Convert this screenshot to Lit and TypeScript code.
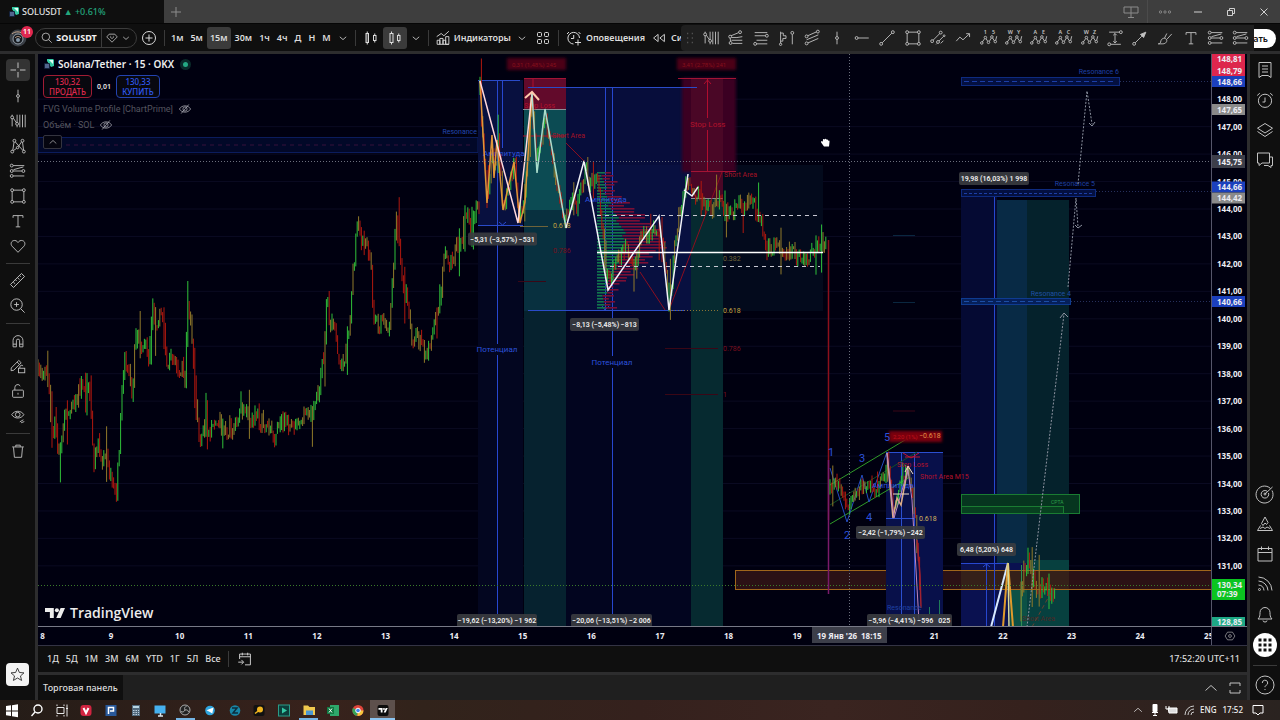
import { LitElement, html, svg, css } from "lit";
import { customElement, state } from "lit/decorators.js";
import { classMap } from "lit/directives/class-map.js";

/* ---------- icons: 20 x 20 grid, 1px strokes ---------- */
const dot = (x: number, y: number, r = 1.6) => svg`<circle cx=${x} cy=${y} r=${r} fill="none"></circle>`;
const p = (d: string) => svg`<path d=${d}></path>`;
const wave = (a: string, b: string) => svg`
  <path d="M2.5 14.5 5 11M6.8 10.8 8.4 13.4M10.5 13.6 12.4 10.2M14 10 16 13.2"></path>
  ${dot(2, 15.5, 1.4)}${dot(6, 9.5, 1.4)}${dot(9.4, 14.8, 1.4)}${dot(13.2, 8.8, 1.4)}${dot(17, 14, 1.4)}${p("M17.4 12.6 18.6 8")}
  <text x="6" y="5.5" class="wl">${a}</text><text x="15" y="5.5" class="wl">${b}</text>`;
const fibs = svg`${p("M4.6 4H17M4.6 10H14.4M4.6 15.500H17M5 8.500 16 5.500")}${dot(3, 4)}${dot(3, 10)}${dot(16, 10)}${dot(3, 15.5)}`;

const icons: Record<string, unknown> = {
  cross: p("M10 2.5V8M10 12v5.5M2.5 10H8M12 10h5.5"),
  vline: svg`${p("M10 3V8.4M10 11.6V17")}${dot(10, 10)}`,
  cycles: svg`${p("M3.5 7.5V16M4.8 6.8 8.4 12.2M9 3v8.500M9 14.8V17M12 3v14M15 3v14M18 3v14M3.5 3v1.500")}${dot(3.5, 6)}${dot(9, 13.2)}`,
  xabcd: svg`${p("M4.2 15 5.6 5.8M7 5.5 15.500 15M15 5.8 16.2 14.600M14 5.300 10.500 10.500M4.800 15.200 8.500 12.600")}${dot(3.6, 16.2)}${dot(6, 4.2)}${dot(15, 4.2)}${dot(16.5, 16.2)}${dot(9.5, 11.8, 1.3)}`,
  fibs,
  rect: svg`${p("M5 3.5H15M5 16.5H15M3.5 5V15M16.5 5V15")}${dot(3.5, 3.5)}${dot(16.5, 3.5)}${dot(3.5, 16.5)}${dot(16.5, 16.5)}`,
  text: p("M4.5 6.5V4h11v2.5M10 4v12.5M7.5 16.5h5"),
  heart: p("M10 17 3.4 10.2C1.6 8.2 2.2 5 4.7 4.1 7 3.3 9 4.4 10 6.2 11 4.4 13 3.3 15.3 4.1 17.8 5 18.4 8.2 16.6 10.2Z"),
  ruler: p("M2.6 14.2 14.2 2.6 17.4 5.8 5.8 17.4ZM5.5 11.5l2 2M7.8 9.2l1.3 1.3M10 7l2 2M12.2 4.8l1.3 1.3"),
  zoom: svg`<circle cx="9" cy="9" r="6"></circle>${p("M13.5 13.5 17.5 17.5M9 6.5v5M6.5 9h5")}`,
  magnet: p("M4.500 16.5V9.5a5.500 5.500 0 0 1 11 0v7h-3.700V9.7a1.800 1.800 0 0 0-3.600 0v6.8ZM4.500 13.5H8.200M11.800 13.5h3.700"),
  pencil: svg`${p("M2.5 12.2 10.8 3.8l2.7 2.6-8.2 8.3-3 .5ZM9 5.6l2.7 2.7")}<rect x="10.5" y="12.5" width="7" height="5"></rect>${p("M12 12.3V11a2 2 0 0 1 3.6-1")}`,
  lock: svg`<rect x="4" y="9" width="12" height="8" rx="1"></rect>${p("M6.5 9V6a3.2 3.2 0 0 1 6-1.5M10 12v2")}`,
  eye: svg`${p("M3 8.5C6 3.5 13.500 3.5 16.500 8.5 13.500 13.5 6 13.5 3 8.5ZM12 16.500l4-2.300M13.500 17.5l3.500-1.300")}<circle cx="9.700" cy="8.5" r="2.6"></circle>`,
  eyeoff: svg`${p("M2 10C5.5 4 14.5 4 18 10 14.5 16 5.5 16 2 10ZM15.5 3.5l-11 13")}<circle cx="10" cy="10" r="3"></circle>`,
  trash: p("M3.5 5.5h13M7.5 5.3V3.5h5v1.8M5 5.8 6 17h8L15 5.8"),
  star: p("M10 2.5 12.2 7.6 17.6 8.1 13.5 11.7 14.8 17 10 14.1 5.2 17 6.5 11.7 2.4 8.1 7.8 7.6Z"),
  search: svg`<circle cx="9" cy="9" r="5.8"></circle>${p("M13.200 13.200 18 18")}`,
  gem: p("M6 4.500h8l3.500 4L10 16 2.500 8.500ZM7.500 8.500 10 11 12.500 8.500M8 7v1M12 7v1"),
  chev: p("M6 8.5 10 12 14 8.5"),
  up: p("M4.500 12.500 10 7.500 15.500 12.500"),
  plus: svg`<circle cx="10" cy="10" r="6.500"></circle>${p("M10 6.5v7M6.5 10h7")}`,
  candles: svg`<rect x="5" y="5.500" width="2.500" height="9" fill="currentColor" fill-opacity=".35"></rect><rect x="12.500" y="7.500" width="2.500" height="5"></rect>${p("M6.250 3.500v2M6.250 14.500V16.500M13.750 5.500v2M13.750 12.500v2")}`,
  hollow: svg`<rect x="5" y="5.500" width="3" height="9"></rect><rect x="12.500" y="7.500" width="2.500" height="5"></rect>${p("M6.500 3.500v2M6.500 14.500V16.500M13.750 5.500v2M13.750 12.500v2")}`,
  indic: p("M3 8.5 8 5 11 7.5 16.5 2.5M3.5 17V12.5h3V17M6.5 17V10.5h3.5V17M10 17V12.5h3V17M13 17V8.5h3.5V17ZM3.5 17h13"),
  tiles: svg`<rect x="4.500" y="4.500" width="4" height="4" rx="1"></rect><rect x="11.500" y="4.500" width="4" height="4" rx="1"></rect><rect x="4.500" y="11.500" width="4" height="4" rx="1"></rect><rect x="11.500" y="11.500" width="4" height="4" rx="1"></rect>`,
  alarm: svg`${p("M15.500 10a5.800 5.800 0 1 0-6 6M9.700 7V10.500H7M3 6 5 4M14.500 4l2 2M14 11.500v6M11 14.500h6")}`,
  clock: svg`<circle cx="10" cy="10.8" r="6.6"></circle>${p("M10 7.5V12H7.5M2.2 5.5 4.8 3.2M15.2 3.2l2.6 2.3")}`,
  rewind: p("M9 6 4 10 9 14ZM16 6 11 10 16 14Z"),
  grip: svg`<path d="M7 5h1M12 5h1M7 10h1M12 10h1M7 15h1M12 15h1" stroke-width="1.4"></path>`,
  fan: svg`${p("M4.500 7.500 13 4M5 9.500H11L17 8.500M5 12.500H17M6 16H17M4 14 3.500 10")}${dot(14.5, 3.5)}${dot(3.5, 8.5)}${dot(4, 15.5)}`,
  lines: svg`${p("M3 4H17M3 7.500H15M5 12.500H17M5 16.500H17")}${dot(16.5, 7.5)}${dot(3.5, 16.5)}`,
  profile: svg`${p("M4 3v13M4 4.500h3v3h3v3H6.500v3H4M17 6V17")}${dot(4, 17, 1.3)}${dot(17, 4.3)}`,
  channel: svg`${p("M5.2 7.5 15 3.200M4 12 17 6.500M5.5 15.500 17 10.500")}${dot(16.5, 2.9)}${dot(4, 8.2)}${dot(4, 16)}`,
  hray: svg`${p("M5.6 10H17.5")}${dot(4, 10)}`,
  trend: svg`${p("M4.6 15.400 15.400 4.600")}${dot(3.5, 16.5)}${dot(16.5, 3.5)}`,
  parallel: svg`${p("M4.5 12.5 12 5M11 13.400 16 8.300M8 17l1-1M13 16l3-3")}${dot(3.5, 13.5)}${dot(13, 4)}${dot(10, 14.4)}${dot(16.8, 7.5, 1)}`,
  zig: p("M2.5 13.500 6.5 9 10 12 17 5.5M13.5 5.2H17.3V9"),
  w15: wave("1", "5"), wwy: wave("W", "Y"), wae: wave("A", "E"), wac: wave("A", "C"), wwz: wave("W", "Z"),
  range: svg`${p("M3.500 3.500H15M5.200 17H16.500M10 5V15.5M8 7l2-2 2 2M8 13.5l2 2 2-2")}${dot(3.6, 17)}${dot(16.5, 3.5)}`,
  arrow: svg`${p("M4.6 15.400 12 8")}<path d="M16.500 3.500 14 9.500 10.500 6Z" fill="currentColor"></path>${dot(3.5, 16.5)}`,
  brush: p("M2.500 16.500c2 0 2.500-1 3-3.500 1-3 4.500-3.500 6-1.500 1.500 2-.5 5-4 5ZM9.500 10 12 5M12 11.500 17.500 5.500"),
  doc: p("M4 2.500H16V17.500L13 15.500H7L4 17.500ZM7 6h6M7 9h6M7 12h6"),
  layers: p("M10 3.500 17.500 8.200 10 13 2.500 8.200ZM2.500 11.500 10 16.500 17.500 11.500"),
  chat: p("M2.500 3H14.500V13H7L4 15.500V13H2.500ZM14.500 7H17.500V15.500H16V17.500L13 15.500H9"),
  target: svg`<path d="M15.500 4.500A8.500 8.500 0 1 0 17 6.500"></path><path d="M12.500 7.500a3.800 3.800 0 1 0 1 1.500M10 10 17.500 3"></path><circle cx="10" cy="10" r="1"></circle>`,
  pyramid: p("M10 3 13 8.500 11.500 10.500 10 9 8 11.500 6.500 9.500ZM5.500 11.500 2.500 16.500H17.500L14.500 11.500M5 14.500 8 13 10 14.500 12 13 15 14.500"),
  cal: p("M3 4.500H17V17H3ZM3 8.500H17M6.500 2.500v3.500M13.500 2.500v3.500"),
  feed: svg`${p("M3.500 3A14 14 0 0 1 17 16.500M3.500 7A10 10 0 0 1 13 16.500M3.500 11A6 6 0 0 1 9 16.500")}<circle cx="4.500" cy="15.500" r="1"></circle>`,
  bell: p("M3 15H17C15 13 15 11 15 8.500A5 5 0 0 0 5 8.500C5 11 5 13 3 15ZM8 16.500a2 1.500 0 0 0 4 0"),
  help: svg`<circle cx="10" cy="10" r="9"></circle>${p("M7.300 8a2.700 2.700 0 1 1 3.900 2.300C10.300 10.800 10 11.200 10 12.200M10 14v1")}`,
  goto: p("M4 10V4.500H16V16.500H10M4 7.500H16M7 3v3M13 3v3M2.500 13.500H8M6 11l2.500 2.500L6 16"),
  full: p("M5 8V5H15V8M5 12v3H15V12"),
  nut: svg`${p("M6.500 4.500h7L17 10l-3.500 5.500h-7L3 10Z")}<circle cx="10" cy="10" r="2"></circle>`,
  screens: p("M3 5H17V11H3ZM10 5V15M7 15.500h6"),
  dots3: svg`${dot(5, 10, 1.300)}${dot(10, 10, 1.300)}${dot(15, 10, 1.300)}`,
  min: p("M6 10h8"),
  restore: p("M6.500 8.500h5v5h-5ZM8.500 8.500V6.500h5v5H11.500"),
  close: p("M6.500 6.500l7 7M13.500 6.500l-7 7"),
  add: p("M10 5v10M5 10h10"),
};
const icon = (n: string, size = 20) =>
  html`<svg class="ic" width=${size} height=${size} viewBox="0 0 20 20" aria-hidden="true">${icons[n]}</svg>`;

const coin = html`<svg width="12" height="12" viewBox="0 0 12 12" aria-hidden="true">
  <path d="M4 1h6l1 1v6L8 9 4 3Z" fill="#35c9a4"></path><path d="M6 2h4v4Z" fill="#e4fff6"></path>
  <rect x="1" y="5" width="6" height="6" rx="1" fill="#15223c"></rect><path d="M2 7h4M2 9h4" stroke="#8fa8e0"></path></svg>`;
const tvMark = (c = "#fff") => svg`<path d="M0 0h9v10H5V4H0ZM16 0h4.500L16 10H11.500Z" fill=${c}></path><circle cx="12.200" cy="2.200" r="2.100" fill=${c}></circle>`;

/* ---------- price series ---------- */
type Pt = [number, number];
const seriesA: Pt[] = [[38,372],[42,378],[46,369],[49,385],[51,435],[55,425],[58,450],[61,440],[65,420],[69,408],[74,400],[79,392],[82,378],[85,405],[88,375],[91,415],[94,460],[98,433],[102,465],[105,455],[108,470],[112,478],[116,498],[119,450],[122,390],[125,358],[129,370],[132,398],[135,350],[138,325],[141,355],[145,345],[149,358],[153,300],[155,325],[158,325],[162,304],[165,345],[168,375],[171,352],[175,362],[180,372],[182,365],[185,385],[187,312],[190,315],[194,370],[197,420],[200,440],[205,425],[212,430],[218,418],[225,430],[235,426],[240,412],[243,405],[250,420],[257,416],[262,422],[270,428],[275,437],[280,420],[285,422],[295,425],[300,425],[305,413],[312,412],[317,398],[320,378],[324,352],[327,292],[330,331],[335,322],[338,355],[342,368],[346,350],[350,320],[353,278],[357,225],[359,222],[362,243],[366,240],[371,268],[373,315],[378,325],[384,320],[389,328],[392,290],[394,250],[396,214],[398,220],[401,265],[405,290],[408,300],[411,335],[416,340],[421,342],[426,360],[430,345],[434,315],[438,308],[441,290],[444,250],[449,262],[455,258],[459,240],[463,235],[465,210],[471,228],[475,212],[479,210]];
const seriesB: Pt[] = [[480,90],[484,160],[488,200],[492,145],[495,175],[498,145],[503,205],[510,180],[515,165],[519,215],[525,200],[528,150],[532,100],[536,165],[541,140],[545,118],[550,145],[556,185],[561,205],[566,222],[569,205],[573,200],[577,210],[582,185],[586,165],[590,185],[597,175],[601,215],[606,275],[610,280],[614,262],[620,255],[626,248],[633,262],[638,255],[641,228],[648,240],[656,225],[662,235],[668,290],[671,290],[675,240],[681,205],[687,180],[692,192],[700,198],[708,208],[714,212],[720,200],[727,215],[735,210],[742,205],[750,200],[757,210],[762,225],[766,250],[776,248],[786,252],[793,252],[800,262],[808,258],[815,250],[822,242],[827,245]];
const seriesC: Pt[] = [[830,490],[833,482],[838,488],[842,495],[847,510],[852,495],[858,488],[864,490],[870,486],[876,495],[882,475],[888,468],[891,490],[894,512],[899,490],[904,480],[908,470],[913,490],[916,530],[920,590]];
const seriesD: Pt[] = [[1021,600],[1024,560],[1028,560],[1033,575],[1036,595],[1040,586],[1046,588],[1050,592],[1055,585]];

function candles(pts: Pt[], noise: number, seed: number) {
  const out = { g: "", r: "", o: "" };
  let s = seed, prev = pts[0][1], k = 0;
  const rnd = () => ((s = (s * 16807) % 2147483647) / 2147483647);
  for (let x = pts[0][0]; x <= pts[pts.length - 1][0]; x += 1.4) {
    while (k < pts.length - 2 && pts[k + 1][0] < x) k++;
    const [x0, y0] = pts[k], [x1, y1] = pts[k + 1];
    const y = y0 + ((y1 - y0) * (x - x0)) / (x1 - x0) + (rnd() - 0.5) * noise;
    const spike = rnd() > 0.88 ? noise * 2 : noise * 0.45;
    const hi = Math.min(prev, y) - rnd() * spike, lo = Math.max(prev, y) + rnd() * spike;
    const seg = `M${x.toFixed(1)} ${hi.toFixed(1)}V${lo.toFixed(1)}`;
    out[rnd() > 0.68 ? "o" : y < prev ? "g" : "r"] += seg;
    prev = y;
  }
  return svg`<path d=${out.r} stroke="#b0180f"></path><path d=${out.o} stroke="#917a2a"></path><path d=${out.g} stroke="#2fc03a"></path>`;
}

const box = (x: number, y: number, w: number, h: number, fill: string, stroke = "none") =>
  svg`<rect x=${x} y=${y} width=${w} height=${h} fill=${fill} stroke=${stroke}></rect>`;
const line = (d: string, stroke: string, dash = "none", w = 1) =>
  svg`<path d=${d} stroke=${stroke} stroke-dasharray=${dash} stroke-width=${w} fill="none"></path>`;
const label = (x: number, y: number, t: string, fill: string, size = 7, anchor = "start") =>
  svg`<text x=${x} y=${y} fill=${fill} font-size=${size} text-anchor=${anchor}>${t}</text>`;
const tip = (x: number, y: number, w: number, t: string) => svg`
  <rect x=${x} y=${y} width=${w} height="13" rx="2" fill="#3a3c40" fill-opacity=".9"></rect>
  <text x=${x + w / 2} y=${y + 9} class="tip">${t}</text>`;

const priceY = (v: number) => 209 + (144 - v) * 27.45;
const ticks = Array.from({ length: 18 }, (_, i) => 131 + i);
const days: [string, number][] = ["8","9","10","11","12","13","14","15","16","17","18","19","","21","22","23","24","25"]
  .map((d, i) => [d, 42.5 + i * 68.6]);

const profile = () => {
  const rows = [];
  for (let y = 172; y < 310; y += 3) {
    const c = Math.exp(-Math.pow((y - 240) / 34, 2));
    const g = 4 + 22 * c + ((y * 7) % 5), r = 2 + 30 * c + ((y * 13) % 11);
    rows.push(svg`<rect x="597" y=${y} width=${g} height="1.6" fill="#12764c"></rect><rect x=${597 + g} y=${y} width=${r} height="1.6" fill="#7a0f35"></rect>`);
  }
  return rows;
};

const plot = svg`
  <defs><filter id="glow"><feGaussianBlur stdDeviation="1.5"></feGaussianBlur></filter></defs>
  ${ticks.map(t => line(`M38 ${priceY(t)}H1211`, "#0a0a22"))}
  ${box(38, 137.5, 440, 15, "#020828", "#0b1c5c")}${line("M66 145H474", "#36103a", "4 4")}
  ${label(477, 133.500, "Resonance", "#2347ad", 7, "end")}
  ${box(478, 80, 45, 146, "#08103f")}${box(478, 226, 45, 401, "#030620")}
  ${box(566, 87, 125, 224, "#070d3b")}${box(566, 311, 125, 316, "#02051f")}
  ${box(524, 78, 42, 31, "#620a2b")}${box(524, 109, 42, 101, "#0c4b53")}${box(524, 210, 42, 101, "#08303f")}${box(524, 311, 42, 316, "#06222f")}
  ${box(691, 165, 132, 146, "#030a1c")}${box(597, 165, 94, 146, "#081040")}
  ${box(691, 198, 32, 429, "#062a30")}
  <g filter="url(#glow)">${box(682, 78, 54, 94, "#3a0520")}${box(507, 58, 59, 12, "#4c0414")}${box(677, 58, 59, 12, "#4c0414")}</g>
  ${box(691, 78, 32, 120, "#4a0726")}
  ${label(512, 67, "0,31 (1,48%) 245", "#86101c", 6)}${label(682, 67, "3,41 (2,78%) 241", "#86101c", 6)}
  ${line("M524 78.500H566M678 78.500H736M691 171.500H736", "#a31435")}
  ${line("M523 109.500H566M691 198.500H723", "#8a8f96")}
  ${line("M707.500 79V118M707.500 130V171M704 84l3.500-4 3.500 4M533 79v8M523 136H566", "#b00e2e")}
  ${line("M478 80.500H520M528 87.500H697M478 225.500H523M528 310.500H685", "#2a4bc8")}
  ${line("M497.500 81V344M497.500 355V614M502.500 81V148M605.500 88V195M605.500 204V309M602 306l3 4 4-4M612.500 88V356M612.500 368V614M499 222l3.500 3 3.500-3", "#2747cf")}
  ${profile()}
  ${line("M566 143 L584 161M640 272 L665 310M669 310 L722 172", "#8c0e20")}
  ${candles(seriesA, 16, 71)}${candles(seriesB, 15, 913)}
  ${label(690, 127, "Stop Loss", "#b3122c", 8)}${label(524, 108, "Stop Loss", "#b3122c", 7)}
  ${label(552, 138, "Short Area", "#a31226", 7)}${label(724, 177, "Short Area", "#a31226", 7)}
  ${label(483, 156, "Амплитуда", "#2c52dc", 8)}${label(585, 202, "Амплитуда", "#2c52dc", 8)}
  ${label(497, 352, "Потенциал", "#2c52dc", 8, "middle")}${label(612, 365, "Потенциал", "#2c52dc", 8, "middle")}
  ${line("M480 81 L487 203 492 135 494 178 497 140 503 210 514 162 520 223 525 202 532 93", "#e09538", "none", 1.5)}
  ${line("M480 81 L518 223 532 93", "#ffd8dc", "none", 1.5)}
  ${line("M532 93 L537 173 545 109 566 228", "#a9dccb", "none", 1.5)}
  ${line("M566 228 L584 161 608 290 659 216 669 310 688 174M684 190 L692 196 698 187", "#f2f2f8", "none", 1.5)}
  ${line("M525 98 L532 92 539 100", "#ffc9ae", "none", 2)}
  ${line("M597 252.500H823", "#fff", "none", 1.6)}
  ${line("M597 215.500H820M610 266.500H820", "#c8c8d2", "4 4")}
  ${label(553, 228, "0.618", "#c4a442")}${label(553, 253, "0.786", "#7a0f1e")}${label(723, 261, "0.382", "#6f6339")}${label(723, 313, "0.618", "#c4a442")}${label(723, 351, "0.786", "#7a0f1e")}${label(723, 397, "1", "#7a0f1e")}
  ${line("M669 310.500H720", "#8a7434", "1 2")}${line("M520 226.500H548", "#6f6339")}
  ${line("M665 348.500H718M665 394.500H718M518 281.500H546M893 411H915", "#3a0716")}
  ${tip(468, 232.500, 69, "−5,31 (−3,57%) −531")}${tip(570, 318, 69, "−8,13 (−5,48%) −813")}
  ${tip(457, 614, 80, "−19,62 (−13,20%) −1 962")}${tip(571, 614, 81, "−20,06 (−13,51%) −2 006")}

  ${box(735.500, 570.500, 476, 19, "#2b1115", "#a0661b")}
  ${line("M828.500 240V520", "#8c101c", "none", 1.500)}${line("M828.500 460V594", "#7b1b6b", "none", 1.500)}
  ${box(886, 453, 57, 174, "#08104a")}${line("M886 452.500H943M901.500 453V614M914.500 453V614M886 518.500H915", "#2b4fd0")}
  ${line("M893 235.500H915M893 302.500H915", "#0a2740")}
  ${line("M830 485 L915 434M830 524 L910 477", "#2f9a28")}${line("M830 505 L917 452", "#124f25")}
  ${line("M830 468 L847 522 862 475 869 502 887 452", "#254dc0")}
  ${candles(seriesC, 14, 333)}
  <g filter="url(#glow)">${box(889, 431, 53, 11, "#7a0511")}</g>
  ${label(893, 439, "2,20 (1%)", "#c0121c", 6)}${label(919, 438, "−0.618", "#e09046")}
  ${label(897, 467, "Stop Loss", "#b3122c")}${label(872, 488, "Амплитуда", "#2c52dc", 8)}
  ${line("M903 453 L911 458 919 453M905 457H920", "#c01430")}
  ${line("M887 453 L893 518 897 498 901 505 908 467", "#dcab84", "none", 1.500)}${line("M905 472 L908 466 913 474M893 494H909", "#f3dfc4")}
  ${line("M887 453 L894 518 908 470 912 500 919 622", "#bf86bd")}
  ${line("M917 540 L920 575 921 608", "#a12230", "none", 1.500)}${line("M929.500 607V614M939.500 600V614", "#1f7b58")}
  ${label(919, 521, "0.618", "#d0b25e")}${label(887, 610, "Resonance", "#1f41a4")}
  ${label(831, 456, "1", "#2c52dc", 11, "middle")}${label(847, 539, "2", "#2c52dc", 11, "middle")}${label(862, 462, "3", "#2c52dc", 11, "middle")}${label(869, 521, "4", "#2c52dc", 11, "middle")}${label(887, 441, "5", "#2c52dc", 11, "middle")}
  ${tip(856, 526, 69, "−2,42 (−1,79%) −242")}${tip(867, 614, 85, "−5,96 (−4,41%) −596 \u00a0 025")}

  ${box(961, 192, 36, 435, "#050a33")}${box(997, 200, 30, 427, "#082a45")}${box(1027, 200, 42, 427, "#05222c")}
  ${box(961, 563, 66, 64, "#0a1150")}${box(1027, 560, 42, 67, "#07403f")}${box(1010, 580, 17, 47, "#0c5146")}
  ${box(961, 571, 108, 18, "#352019")}${line("M961 570.500H1069M961 589.500H1069", "#a0661b")}
  ${label(920, 479, "Short Area M15", "#b3122c", 7)}
  ${line("M961 192.500H1027M994.500 192V627M986.500 564V627M961 563.500H1008M983 567l3.500-3 3.500 3M991 197l3.500-4 3.500 4", "#2747cf")}${line("M1021.500 565V627", "#2c8f52")}
  ${box(961.500, 77.500, 158, 8, "#041040", "#0e2b80")}${line("M964 81.500H1116", "#1c3ea6", "5 3")}
  ${box(961.500, 189.500, 134, 7, "#041040", "#0e2b80")}${line("M964 193.500H1094", "#1c3ea6", "3 2")}
  ${box(961.500, 298.500, 109, 6, "#06205a", "#0e3b90")}${line("M964 301.500H1068", "#1c4ea6", "5 3")}
  ${line("M1120 81.500H1211M1096 191.500H1211M1071 301.500H1211", "#26305c", "1 2")}
  ${label(1119, 74, "Resonance 6", "#1f41a4", 7, "end")}${label(1095, 186, "Resonance 5", "#1f41a4", 7, "end")}${label(1071, 296, "Resonance 4", "#1f51a4", 7, "end")}
  ${box(961.500, 494.500, 118, 19, "#06351f", "#1a7c32")}${box(961.500, 506.500, 102, 7, "#084020", "#1a7c32")}${label(1051, 504, "СРТА", "#2ca048", 5)}
  ${line("M991 627 L1008 563", "#d8e9ff", "none", 2)}${line("M1003 627 L1008 563 1013 627", "#e09a2c", "none", 2)}${line("M1008 563 L1009 627", "#d6dc9a", "none", 1.500)}
  ${candles(seriesD, 18, 4242)}
  ${label(1022, 621, "Short Area", "#4d2826")}${line("M1032 627 L1053 589", "#6a4130", "4 3")}
  ${line("M1027 627 L1064 314M1068 287 L1076 198 1078 227M1078 184 L1087 91 1092 124", "#8d93a0", "2 1.500")}
  ${line("M1060 318 L1064 313 1068 317M1075 225 L1078 228 1082 225M1089 123 L1092 126 1095 122", "#8d93a0")}
  ${tip(959, 172, 70, "19,98 (16,03%) 1 998")}${tip(957, 543, 59, "6,48 (5,20%) 648")}

  ${line("M38 585.500H1211", "#3a7a2a", "1 2")}
  ${line("M38 161.500H1211M849.500 54V627", "#6b6f7c", "1 2")}
  <g transform="translate(820 137)" fill="#fff"><path d="M2 4c-1 0-1.500 1-.5 2L4 9.500h5L9.500 5c.2-1.500-.8-1.800-1.200-1C8.200 2.500 7 2 6.600 2.800 6.200 1.400 5 1.300 4.600 2.400 4 1.500 2.800 1.800 2.900 3v1.800Z"></path></g>
`;

const tagData: [string, number, string, number][] = [
  ["148,81", 59, "#dd264d", 12], ["148,79", 70.5, "#dd264d", 11], ["148,66", 81.5, "#1b40bd", 11], ["147,65", 109.5, "#8a8a8a", 11],
  ["145,75", 161.5, "#3c3e49", 13], ["144,66", 187, "#1b40bd", 11], ["144,42", 198, "#8a8a8a", 11],
  ["140,66", 301.5, "#1b40bd", 11], ["128,85", 622, "#1ea886", 10],
];

@customElement("app-root")
export class AppRoot extends LitElement {
  @state() private frame = "15м";

  static styles = css`
    :host { display: grid; grid-template-rows: 23px 28px 1fr 20px; height: 100vh; overflow: hidden; background: #2d2d2e;
      font: 500 9px/14px "Noto Sans", "Open Sans", sans-serif; color: #dcdcdc; }
    * { box-sizing: border-box; }
    button { font: inherit; color: inherit; background: none; border: 0; padding: 0; margin: 0; display: flex; align-items: center; justify-content: center; flex: none; }
    svg { display: block; flex: none; }
    .ic { fill: none; stroke: currentColor; stroke-width: 1; }
    .wl { font-size: 6px; font-weight: 600; text-anchor: middle; fill: currentColor; stroke: none; }
    .tabs { display: flex; background: #3e3e3e; }
    .tab { width: 164px; background: #0f0f0f; display: flex; align-items: center; gap: 2px; padding-left: 8px; color: #e2e2e2; }
    .tab .up { color: #23a67d; }
    .newtab { width: 24px; color: #8c8c8c; }
    .win { margin-left: auto; display: flex; align-items: center; color: #d0d0d0; }
    .win button { width: 33px; height: 23px; }
    .win .dim { color: #8b8b8b; }
    .win .brd { border-right: 1px solid #4b4b4b; }
    .bar { display: flex; align-items: center; background: #0f0f0f; position: relative; white-space: nowrap; overflow: hidden; border-top: 1px solid #060606; font-weight: 600; }
    .avatar { width: 35px; height: 27px; position: relative; }
    .avatar span { position: absolute; left: 21px; top: 2px; width: 12px; height: 12px; border-radius: 6px; background: #e0284f; color: #fff; font-size: 7px; line-height: 12px; text-align: center; }
    .pill { display: flex; align-items: center; height: 20px; border: 1px solid #3c3c3c; border-radius: 10px; width: 102px; flex: none; }
    .pill button { height: 18px; }
    .pill .sym { width: 66px; border-right: 1px solid #3c3c3c; gap: 3px; font-weight: 700; color: #f2f2f2; }
    .pill .lists { width: 34px; }
    .sq { width: 24px; height: 22px; }
    .sep { width: 1px; height: 16px; background: #3a3a3a; flex: none; margin: 0 3px; }
    .frames { display: flex; gap: 1px; }
    .tf { padding: 0 3px; height: 22px; border-radius: 3px; }
    .tf.on, .sq.on { background: #3b3b3b; border-radius: 3px; }
    .ch { width: 18px; height: 22px; }
    .wide { height: 22px; gap: 2px; padding: 0 2px; }
    .drawbar { position: absolute; left: 681px; right: 26px; top: 1px; bottom: 0; background: #1f1f1f; border-radius: 4px 0 0 4px; display: flex; align-items: center; color: #c2c2c2; }
    .drawbar .grip { width: 17px; color: #666; flex: none; }
    .drawbar button { flex: 1 1 0; height: 26px; min-width: 0; }
    .publish { position: absolute; right: 4px; top: 5px; height: 19px; width: 80px; border-radius: 10px; background: #fff; color: #111; justify-content: flex-end; padding-right: 8px; }
    .work { display: grid; grid-template-columns: 35px 1fr 30px; column-gap: 3px; padding-top: 3px; min-height: 0; }
    .side { background: #0f0f0f; display: flex; flex-direction: column; align-items: center; min-height: 0; color: #c2c2c2; }
    .left { padding: 3px 0 14px; }
    .left button { width: 24px; height: 25px; }
    .left button.on { background: #333; height: 22px; border-radius: 4px; margin: 2px 0; }
    .left hr, .right hr { width: 24px; height: 1px; border: 0; background: #3a3a3a; margin: 4px 0; flex: none; }
    .left hr { margin: 5px 0 4px; }
    .left .fav { margin-top: auto; width: 23px; height: 23px; background: #f4f4f4; border-radius: 4px; color: #222; }
    .right { padding: 1px 0 0; }
    .right button { width: 30px; height: 30px; }
    .right .gap { margin-top: auto; }
    .right .apps { height: 24px; width: 24px; margin: 4px 0; border-radius: 12px; background: #fff; color: #111; }
    .center { display: grid; grid-template-rows: 1fr 19px 26px 28px; min-height: 0; min-width: 0; background: #000010; }
    .chart { display: grid; grid-template-columns: 1fr 36px; min-height: 0; border-bottom: 1px solid #777986; }
    .fill { width: 100%; height: 100%; position: absolute; inset: 0; }
    .plot { position: relative; min-height: 0; min-width: 0; }
    .plot text { font-family: Roboto, "Noto Sans", sans-serif; font-weight: 400; }
    .plot .tip { font-size: 7px; font-weight: 600; fill: #f0f0f0; text-anchor: middle; }
    .scale { border-left: 1px solid #55566a; min-height: 0; position: relative; }
    .scale text, .time text { fill: #ececf2; font-size: 8px; font-weight: 700; }
    .time { display: grid; grid-template-columns: 1fr 36px; border-bottom: 1px solid #333344; min-width: 0; }
    .time > svg { width: 100%; height: 18px; }
    .time button { border-left: 1px solid #55566a; color: #aaa; }
    .legend { position: absolute; left: 5px; top: 3px; display: flex; flex-direction: column; align-items: flex-start; }
    .title { display: flex; align-items: center; gap: 3px; height: 14px; font-size: 10px; font-weight: 600; color: #ededed; margin: 0; }
    .live { width: 5px; height: 5px; border-radius: 3px; background: #24a984; box-shadow: 0 0 0 3px #0a2a2a; margin-left: 6px; }
    .trade { display: flex; align-items: center; margin-top: 4px; gap: 5px; }
    .trade button { flex-direction: column; width: 49px; height: 23px; border: 1px solid #a01c34; border-radius: 4px; color: #e0284f; background: #08080f; font-size: 8px; line-height: 10px; font-weight: 500; }
    .trade .buy { width: 44px; border-color: #2343b0; color: #2f5af0; }
    .trade > span { font-size: 7px; font-weight: 600; color: #e4e4e4; }
    .ind { display: flex; align-items: center; gap: 5px; height: 16px; color: #55555f; font: 400 9px/14px Roboto, "Noto Sans", sans-serif; }
    .ind svg { color: #b8b8c0; }
    .ind.first { margin-top: 3px; }
    .fold { width: 19px; height: 14px; border: 1px solid #34343f; border-radius: 2px; background: #05050f; margin-top: 2px; }
    .brand { position: absolute; left: 7px; bottom: 4px; display: flex; align-items: center; gap: 5px; font: 600 14px/18px "Open Sans", "Noto Sans", sans-serif; color: #ececec; }
    .ranges { display: flex; align-items: center; gap: 1px; background: #0f0f0f; padding: 0 7px 0 6px; }
    .ranges button { padding: 0 3px; height: 20px; }
    .ranges .clock { margin-left: auto; }
    .panel { display: flex; align-items: stretch; background: #1f1f1f; border-top: 3px solid #2d2d2e; }
    .panel .name { background: #0f0f0f; padding: 0 5px; }
    .panel .end { margin-left: auto; display: flex; color: #c2c2c2; }
    .panel .end button { width: 24px; }
    .task { display: flex; align-items: center; background: linear-gradient(90deg, #241c17, #38221c 25%, #31231b 33%, #35211d 50%, #3a2420 65%, #35211d 80%, #2a2320); color: #efefef; }
    .apps-row { display: grid; grid-template-columns: repeat(16, 1fr); width: 395px; height: 20px; }
    .apps-row button { height: 20px; }
    .apps-row .run { border-bottom: 2px solid #74b4e4; padding-top: 2px; margin: 0 3px; }
    .apps-row .cur { border-bottom: 2px solid #8cc4f0; padding-top: 2px; background: #5d504c; }
    .tray { margin-left: auto; display: flex; align-items: center; height: 20px; font-size: 8px; padding-right: 10px; }
    .tray button { height: 20px; width: 17px; }
    .tray .t { width: auto; padding: 0 3px; }
    .tray .note { width: 24px; }
  `;

  private tfs = ["1м", "5м", "15м", "30м", "1ч", "4ч", "Д", "Н", "М"];

  private taskIcons = [
    svg`<path d="M2 4 7 3.300V8.500H2ZM8 3.200 14 2.300V8.500H8ZM2 9.500H7V14L2 13.300ZM8 9.500H14V15.200L8 14.200Z" fill="#fff"></path>`,
    svg`<g fill="none" stroke="#fff" stroke-width="1.400"><circle cx="9" cy="7" r="4"></circle><path d="M6 10 2.500 14"></path></g>`,
    svg`<g fill="none" stroke="#e6e6e6"><path d="M3 5.500H10V11.500H3ZM3 2.500V4M10 2.500V4M3 13V14.500M10 13V14.500M13 2.500V14.500M12 6.500h2"></path></g>`,
    svg`<rect x="2.500" y="3" width="11" height="11" rx="3" fill="#d12440"></rect><path d="M5.500 6 8 11 10.500 6" fill="none" stroke="#fff" stroke-width="2"></path>`,
    svg`<rect x="2.500" y="3" width="11" height="11" fill="#28589a"></rect><path d="M5.500 12V5.500h5v3.500H7" fill="none" stroke="#fff" stroke-width="1.500"></path>`,
    svg`<rect x="4" y="3" width="8" height="11" fill="#51697c"></rect><rect x="5" y="4" width="6" height="2" fill="#b8d6e4"></rect><path d="M5 8.500h6M5 10.500h6M5 12.500h6" stroke="#bcd" stroke-dasharray="1.500 1"></path>`,
    svg`<rect x="2.500" y="3.500" width="11" height="8" fill="#46b0ee"></rect><path d="M6 14h5M8.500 11v3" stroke="#d8e4ec" stroke-width="1.500"></path>`,
    svg`<circle cx="8" cy="8" r="5" fill="#222" stroke="#a9a9a9"></circle><path d="M8 8C7 6 8 4.500 9.500 4.500M8 8c2-.5 3.500.5 3.500 2M8 8c-1 2-2.500 2.500-4 1.500" stroke="#a9a9a9" fill="none"></path>`,
    svg`<circle cx="8" cy="8.500" r="4.800" fill="#2fa5df"></circle><path d="M4.500 8.300 11.500 5.500 10.300 11.500 7 9.500Z" fill="#fff"></path>`,
    svg`<circle cx="8" cy="8.500" r="5.300" fill="#1886a6"></circle><path d="M5 6H10L6 11H11" stroke="#0b2d3c" fill="none" stroke-width="1.500"></path>`,
    svg`<rect x="2.500" y="3" width="11" height="11" rx="2" fill="#111"></rect><circle cx="9" cy="7.500" r="3" fill="#f0b41e"></circle><path d="M4 11.500 8 8.500" stroke="#f0b41e" stroke-width="1.500"></path>`,
    svg`<rect x="2.500" y="3" width="11" height="11" fill="#0d3e3b" stroke="#2a9c88"></rect><path d="M6 5.500 11 8.500 6 11.500Z" fill="#35c9a4"></path>`,
    svg`<path d="M2.500 3.500H7L8.500 5H14V13H2.500Z" fill="#f1c84e"></path><rect x="5" y="8.500" width="7" height="4.500" fill="#4a96d2"></rect>`,
    svg`<rect x="5" y="3" width="9" height="11" fill="#2ea86a"></rect><rect x="2" y="5" width="7" height="7" fill="#117a42"></rect><path d="M4 6.500 7 10.500M7 6.500 4 10.500" stroke="#fff"></path>`,
    svg`<circle cx="8" cy="8.500" r="5.500" fill="#e2443a"></circle><path d="M8 8.500 3 6A5.500 5.500 0 0 0 7 14Z" fill="#35a455"></path><path d="M8 8.500H13.500A5.500 5.500 0 0 1 7.500 14Z" fill="#f4c63c"></path><circle cx="8" cy="8.500" r="2.300" fill="#4387f0" stroke="#fff"></circle>`,
    svg`<rect x="2.500" y="3" width="11" height="11" rx="2" fill="#0c0c0c"></rect><g transform="translate(3.500 6) scale(.450)">${tvMark()}</g>`,
  ];
  private taskNames = ["Пуск", "Поиск", "Задачи", "Vivaldi", "Редактор", "Калькулятор", "Компьютер", "OBS", "Telegram", "Сканер", "Биржа", "Видео", "Проводник", "Excel", "Chrome", "TradingView"];

  private tool(n: string, cls = "") { return html`<button class=${cls} aria-label=${n}>${icon(n)}</button>`; }

  render() {
    return html`
      <header class="tabs">
        <div class="tab">${coin}<span>SOLUSDT</span><span class="up">▲ +0.61%</span></div>
        <button class="newtab" aria-label="Новая вкладка">${icon("add")}</button>
        <div class="win">
          <button class="dim brd" aria-label="Экраны">${icon("screens")}</button><button class="dim" aria-label="Меню">${icon("dots3", 18)}</button>
          ${["min", "restore", "close"].map(n => this.tool(n))}
        </div>
      </header>

      <nav class="bar">
        <button class="avatar" aria-label="Профиль">
          <svg width="18" height="18" viewBox="0 0 18 18"><circle cx="9" cy="9" r="8.500" fill="#3a3f46"></circle><circle cx="9" cy="10" r="5" fill="#14171c" stroke="#98a2ac"></circle><path d="M3 5C6 2 12 2 15 6M6 9c2-2 4-2 6 0" stroke="#c5a58c" fill="none"></path><circle cx="9" cy="11" r="2" fill="#8598a8"></circle></svg>
          <span>11</span>
        </button>
        <div class="pill">
          <button class="sym">${icon("search", 13)}SOLUSDT</button>
          <button class="lists" aria-label="Списки">${icon("gem", 14)}${icon("chev", 14)}</button>
        </div>
        ${this.tool("plus", "sq")}
        <i class="sep"></i>
        <div class="frames">
          ${this.tfs.map(t => html`<button class=${classMap({ tf: true, on: t === this.frame })} @click=${() => (this.frame = t)}>${t}</button>`)}
        </div>
        <button class="ch" aria-label="Интервалы">${icon("chev", 16)}</button>
        <i class="sep"></i>
        ${this.tool("candles", "sq")}${this.tool("hollow", "sq on")}
        <button class="ch" aria-label="Тип графика">${icon("chev", 16)}</button>
        <i class="sep"></i>
        <button class="wide">${icon("indic", 18)}Индикаторы</button>
        <button class="ch" aria-label="Шаблоны">${icon("chev", 16)}</button>
        ${this.tool("tiles", "sq")}
        <i class="sep"></i>
        <button class="wide">${icon("alarm", 20)}Оповещения</button>
        <button class="sq" aria-label="Назад">${icon("rewind", 18)}</button><span>Симуляция</span>
        <button class="publish">Публиковать</button>
        <div class="drawbar">
          <span class="grip">${icon("grip", 18)}</span>
          ${["cycles", "fan", "lines", "profile", "channel", "vline", "hray", "trend", "rect", "parallel", "zig", "w15", "wwy", "wae", "wac", "wwz", "range", "arrow", "brush", "text", "fibs", "fibs"].map(n => html`<button aria-label=${n}>${icon(n, 18)}</button>`)}
        </div>
      </nav>

      <main class="work">
        <aside class="side left">
          ${this.tool("cross", "on")}${["vline", "cycles", "xabcd", "fibs", "rect", "text", "heart"].map(n => html`<button aria-label=${n}>${icon(n, 18)}</button>`)}
          <hr />${["ruler", "zoom"].map(n => html`<button aria-label=${n}>${icon(n, 19)}</button>`)}
          <hr />${["magnet", "pencil", "lock", "eye"].map(n => html`<button aria-label=${n}>${icon(n, 18)}</button>`)}
          <hr /><button aria-label="Удалить">${icon("trash", 18)}</button>
          <button class="fav" aria-label="Избранное">${icon("star", 17)}</button>
        </aside>

        <section class="center">
          <div class="chart">
            <div class="plot">
              <svg class="fill" viewBox="38 54 1173 573" preserveAspectRatio="xMinYMin slice" fill="none">${plot}</svg>
              <div class="legend">
                <h1 class="title">${coin}Solana/Tether · 15 · OKX<span class="live"></span></h1>
                <div class="trade">
                  <button><span>130,32</span><span>ПРОДАТЬ</span></button><span>0,01</span>
                  <button class="buy"><span>130,33</span><span>КУПИТЬ</span></button>
                </div>
                <div class="ind first">FVG Volume Profile [ChartPrime] ${icon("eyeoff", 14)}</div>
                <div class="ind">Объём · SOL ${icon("eyeoff", 14)}</div>
                <button class="fold" aria-label="Свернуть">${icon("up", 12)}</button>
              </div>
              <div class="brand"><svg width="20" height="10" viewBox="0 0 20.500 10">${tvMark("#ececec")}</svg>TradingView</div>
            </div>
            <div class="scale">
              <svg class="fill" viewBox="1212 54 35 573" preserveAspectRatio="xMinYMin slice">
                ${ticks.map(t => svg`<text x="1217" y=${priceY(t) + 3}>${t},00</text>`)}
                ${tagData.map(([t, y, c, h]) => svg`<rect x="1212" y=${y - h / 2} width="33" height=${h} fill=${c}></rect><text x="1217" y=${y + 3}>${t}</text>`)}
                <rect x="1212" y="579" width="33" height="21" fill="#0bc420"></rect><text x="1217" y="587.500">130,34</text><text x="1217" y="597">07:39</text>
              </svg>
            </div>
          </div>
          <div class="time">
            <svg viewBox="38 628 1173 18" preserveAspectRatio="xMinYMin slice">
              ${days.map(([d, x]) => svg`<text x=${x} y="640" text-anchor="middle">${d}</text>`)}
              <rect x="812" y="628" width="75" height="16" fill="#3c3e49"></rect><text x="817" y="640">19 Янв '26</text><text x="861" y="640">18:15</text>
            </svg>
            <button aria-label="Настройки">${icon("nut", 14)}</button>
          </div>
          <div class="ranges">
            ${["1Д", "5Д", "1М", "3М", "6М", "YTD", "1Г", "5Л", "Все"].map(r => html`<button>${r}</button>`)}
            <i class="sep"></i><button aria-label="Перейти к">${icon("goto", 18)}</button>
            <span class="clock">17:52:20 UTC+11</span>
          </div>
          <div class="panel">
            <button class="name">Торговая панель</button>
            <div class="end">${this.tool("up")}${this.tool("full")}</div>
          </div>
        </section>

        <aside class="side right">
          ${["doc", "clock", "layers", "chat"].map(n => this.tool(n))}
          <i class="gap"></i>
          ${["target", "pyramid", "cal", "feed", "bell"].map(n => this.tool(n))}
          <button class="apps" aria-label="Продукты"><svg width="14" height="14" viewBox="0 0 14 14" fill="#111">${[1, 6, 11].map(y => [1, 6, 11].map(x => svg`<rect x=${x - 0.5} y=${y - 0.5} width="3" height="3"></rect>`))}</svg></button>
          <hr />${this.tool("help")}
        </aside>
      </main>

      <footer class="task">
        <div class="apps-row">
          ${this.taskIcons.map((ic, i) => html`<button class=${classMap({ run: i === 7 || i === 12, cur: i === 15 })} aria-label=${this.taskNames[i]}><svg width="16" height="16" viewBox="0 0 16 16">${ic}</svg></button>`)}
        </div>
        <div class="tray">
          <button aria-label="Ещё">${icon("up", 14)}</button>
          <button aria-label="Микрофон"><svg width="12" height="14" viewBox="0 0 12 14"><rect x="3.500" y="1" width="5" height="8" rx="1" fill="#fff"></rect><path d="M3 9.500h6M6 9v4M4 12.500h4" stroke="#fff"></path></svg></button>
          <button aria-label="Батарея"><svg width="13" height="10" viewBox="0 0 13 10"><path d="M3 3h9v5H4Z" fill="#ddd" stroke="#fff"></path><path d="M1 1v3h3V1" stroke="#fff" fill="none"></path></svg></button>
          <button aria-label="Сеть"><svg width="12" height="12" viewBox="0 0 12 12" fill="none" stroke="#ccc"><path d="M2 11A9 9 0 0 1 11 2M5 11a6 6 0 0 1 6-6M8 11a3 3 0 0 1 3-3"></path></svg></button>
          <button class="t">ENG</button><button class="t">17:52</button>
          <button class="note" aria-label="Уведомления"><svg width="12" height="12" viewBox="0 0 12 12" fill="none" stroke="#fff"><path d="M1 1.500H11V9H8L6 11 4 9H1Z"></path></svg></button>
        </div>
      </footer>
    `;
  }
}
